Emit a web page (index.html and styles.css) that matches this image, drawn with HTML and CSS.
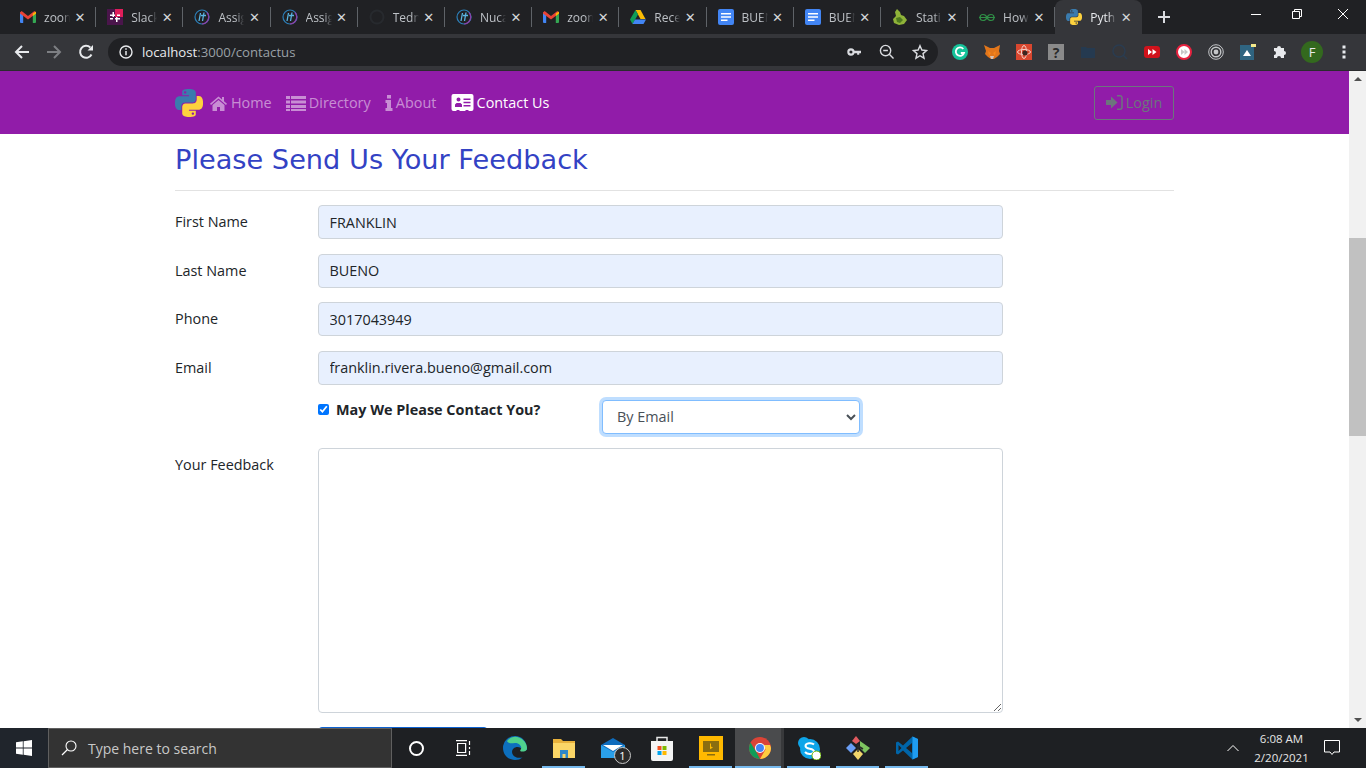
FILE: index.html
```html
<!DOCTYPE html>
<html lang="en">
<head>
    <meta charset="utf-8">
    <title>Contact Us</title>
    <link rel="stylesheet" href="styles.css">
</head>
<body>
    <svg class="defs" width="0" height="0">
        <symbol id="gmail" viewBox="0 0 16 16">
            <path fill="#4285f4" d="M0 3.5h3.2V14H1a1 1 0 0 1-1-1z"/>
            <path fill="#34a853" d="M12.8 3.5H16V13a1 1 0 0 1-1 1h-2.2z"/>
            <path fill="#ea4335" d="M0 3.5 1.6 2 8 7l6.4-5L16 3.5v1L8 10.400 0 4.500z"/>
            <path fill="#fbbc04" d="M12.800 4.500 16 2.600v2l-3.200 2.400z"/>
        </symbol>
        <symbol id="ithub" viewBox="0 0 16 16">
            <circle cx="8" cy="8" r="7" fill="none" stroke="#2c7fb8" stroke-width="1.200"/>
            <path fill="none" stroke="#8e3fa8" stroke-width="1.200" d="M13 3.500A7 7 0 0 1 8 15"/>
            <path fill="none" stroke="#5ab4e0" stroke-width="1.300" d="M6.500 4 5 12M10 3.500 8.500 12M7 6.500h5"/>
        </symbol>
        <symbol id="docs" viewBox="0 0 16 16">
            <rect width="16" height="16" rx="2" fill="#4285f4"/>
            <path fill="#fff" d="M3 4h10v1.500H3zM3 7.200h10v1.500H3zM3 10.400h6.500v1.500H3z"/>
        </symbol>
        <symbol id="python" viewBox="0 0 24 24">
            <path fill="#3a7bad" fill-rule="evenodd" d="M14.250.18l.9.2.73.26.59.3.45.32.34.34.25.34.16.33.1.3.04.26.02.2-.01.13V8.500l-.05.63-.13.55-.21.46-.26.38-.3.31-.33.25-.35.19-.35.14-.33.1-.3.07-.26.04-.21.02H8.770l-.69.05-.59.14-.5.22-.41.27-.33.32-.27.35-.2.36-.15.37-.1.35-.07.32-.04.27-.02.21v3.060H3.170l-.21-.03-.28-.07-.32-.12-.35-.18-.36-.26-.36-.36-.35-.46-.32-.59-.28-.73-.21-.88-.14-1.050-.05-1.230.06-1.220.16-1.040.24-.87.32-.71.36-.57.4-.44.42-.33.42-.24.4-.16.36-.1.32-.05.24-.01h.16l.06.01h8.160v-.83H6.180l-.01-2.750-.02-.37.05-.34.11-.31.17-.28.25-.26.31-.23.38-.2.44-.18.51-.15.58-.12.64-.1.71-.06.77-.04.84-.02 1.270.05zm-6.300 1.980l-.23.33-.08.41.08.41.23.34.33.22.41.09.41-.09.33-.22.23-.34.08-.41-.08-.41-.23-.33-.33-.22-.41-.09-.41.09z"/>
            <path fill="#fdd23e" fill-rule="evenodd" d="M21.040 6.110l.28.06.32.12.35.18.36.27.36.35.35.47.32.59.28.73.21.88.14 1.040.05 1.230-.06 1.230-.16 1.040-.24.86-.32.71-.36.57-.4.45-.42.33-.42.24-.4.16-.36.09-.32.05-.24.02-.16-.01h-8.220v.82h5.840l.01 2.760.02.36-.05.34-.11.31-.17.29-.25.25-.31.24-.38.2-.44.17-.51.15-.58.13-.64.09-.71.07-.77.04-.84.01-1.270-.04-1.070-.14-.9-.2-.73-.25-.59-.3-.45-.33-.34-.34-.25-.34-.16-.33-.1-.3-.04-.25-.02-.2.01-.13v-5.340l.05-.64.13-.54.21-.46.26-.38.3-.32.33-.24.35-.2.35-.14.33-.1.3-.06.26-.04.21-.02.13-.01h5.840l.69-.05.59-.14.5-.21.41-.28.33-.32.27-.35.2-.36.15-.36.1-.35.07-.32.04-.28.02-.21V6.070h2.090l.14.01zm-6.470 14.250l-.23.33-.08.41.08.41.23.33.33.23.41.08.41-.08.33-.23.23-.33.08-.41-.08-.41-.23-.33-.33-.23-.41-.08-.41.08z"/>
        </symbol>
    </svg>

    <!-- browser tabs -->
    <div class="tabstrip">
        <div class="tab">
            <svg class="favicon"><use href="#gmail"/></svg><span class="tab-title">zoom</span><span class="tab-close">&#10005;</span>
        </div>
        <div class="tab">
            <svg class="favicon" viewBox="0 0 16 16"><rect width="16" height="16" fill="#4a154b"/><path fill="#e01e5a" d="M8 0h8v8H8z"/><path fill="#fff" d="M3 5.500h5V7H3zM8 9h5v1.500H8zM5.500 3H7v5H5.500zM9 8h1.500v5H9zM3 9h3v1.500H3zM10 5.500h3V7h-3z"/></svg><span class="tab-title">Slack</span><span class="tab-close">&#10005;</span>
        </div>
        <div class="tab">
            <svg class="favicon"><use href="#ithub"/></svg><span class="tab-title">Assig</span><span class="tab-close">&#10005;</span>
        </div>
        <div class="tab">
            <svg class="favicon"><use href="#ithub"/></svg><span class="tab-title">Assig</span><span class="tab-close">&#10005;</span>
        </div>
        <div class="tab">
            <svg class="favicon" viewBox="0 0 16 16"><circle cx="8" cy="8" r="7.500" fill="#272a2e"/><circle cx="8" cy="8" r="5.500" fill="#202124"/></svg><span class="tab-title">Tedn</span><span class="tab-close">&#10005;</span>
        </div>
        <div class="tab">
            <svg class="favicon"><use href="#ithub"/></svg><span class="tab-title">Nuca</span><span class="tab-close">&#10005;</span>
        </div>
        <div class="tab">
            <svg class="favicon"><use href="#gmail"/></svg><span class="tab-title">zoom</span><span class="tab-close">&#10005;</span>
        </div>
        <div class="tab">
            <svg class="favicon" viewBox="0 0 16 16"><path fill="#fbbc04" d="M5.500 1h5l5 9h-5z"/><path fill="#0f9d58" d="M5.500 1 0 10.500 2.500 15l5.500-9.500z"/><path fill="#4285f4" d="M5 10.500h11L13.500 15h-11z"/></svg><span class="tab-title">Rece</span><span class="tab-close">&#10005;</span>
        </div>
        <div class="tab">
            <svg class="favicon"><use href="#docs"/></svg><span class="tab-title">BUEN</span><span class="tab-close">&#10005;</span>
        </div>
        <div class="tab">
            <svg class="favicon"><use href="#docs"/></svg><span class="tab-title">BUEN</span><span class="tab-close">&#10005;</span>
        </div>
        <div class="tab">
            <svg class="favicon" viewBox="0 0 16 16"><path fill="#8fb339" d="M5 0l3 3 1 3 3 1 3 4-3 4-5 1-5-2-1-4 3-3-1-4z"/><path fill="#4e7a1e" d="M4 9l4-1 3 3-3 3-3-1z"/></svg><span class="tab-title">Stati</span><span class="tab-close">&#10005;</span>
        </div>
        <div class="tab">
            <svg class="favicon" viewBox="0 0 16 16"><path fill="none" stroke="#2f8d46" stroke-width="1.200" d="M0 8.500h16M8 8.500C7 6 5.500 5.500 4 5.500A3 3 0 0 0 4 11.500C5.500 11.500 7 11 8 8.500C9 6 10.500 5.500 12 5.500A3 3 0 0 1 12 11.500C10.500 11.500 9 11 8 8.500"/></svg><span class="tab-title">How</span><span class="tab-close">&#10005;</span>
        </div>
        <div class="tab tab-active">
            <svg class="favicon"><use href="#python"/></svg><span class="tab-title">Pyth</span><span class="tab-close">&#10005;</span>
        </div>
        <svg class="new-tab" width="14" height="14" viewBox="0 0 14 14"><path stroke="#dadce0" stroke-width="2" d="M7 1v12M1 7h12"/></svg>
        <div class="window-controls">
            <svg width="12" height="12" viewBox="0 0 12 12"><path stroke="#fff" d="M1 6.500h10"/></svg>
            <svg width="12" height="12" viewBox="0 0 12 12"><path fill="none" stroke="#fff" d="M1.500 3.500h7v7h-7zM3.500 3.500v-2h7v7h-2"/></svg>
            <svg width="12" height="12" viewBox="0 0 12 12"><path stroke="#fff" d="M1 1l10 10M11 1 1 11"/></svg>
        </div>
    </div>

    <!-- address bar -->
    <div class="toolbar">
        <svg class="tool" width="16" height="16" viewBox="0 0 16 16"><path fill="none" stroke="#e8eaed" stroke-width="2" d="M15 8H2M8 2 2 8l6 6"/></svg>
        <svg class="tool" width="16" height="16" viewBox="0 0 16 16"><path fill="none" stroke="#7d7f83" stroke-width="2" d="M1 8h13M8 2l6 6-6 6"/></svg>
        <svg class="tool" width="16" height="16" viewBox="0 0 16 16"><path fill="none" stroke="#e8eaed" stroke-width="2" d="M13.500 10.500A6 6 0 1 1 12.300 3.500"/><path fill="#e8eaed" d="M9.500 6.500H15V1z"/></svg>
        <div class="omnibox">
            <svg width="14" height="14" viewBox="0 0 14 14"><circle cx="7" cy="7" r="6" fill="none" stroke="#e8eaed" stroke-width="1.400"/><path stroke="#e8eaed" stroke-width="1.500" d="M7 6v4.200M7 3.300v1.500"/></svg>
            <span class="url"><span class="url-host">localhost</span>:3000/contactus</span>
            <div class="omnibox-actions">
                <svg width="14" height="14" viewBox="0 0 16 16"><circle cx="4.500" cy="8" r="3" fill="none" stroke="#dadce0" stroke-width="2.400"/><path fill="#dadce0" d="M7 6.600h9v2.800h-2v1.800h-2.400V9.400H7z"/></svg>
                <svg width="15" height="15" viewBox="0 0 16 16"><circle cx="7" cy="7" r="5.500" fill="none" stroke="#dadce0" stroke-width="1.500"/><path stroke="#dadce0" stroke-width="1.500" d="M11 11l4.500 4.500M4.500 7h5"/></svg>
                <svg width="16" height="16" viewBox="0 0 17 17"><path fill="none" stroke="#dadce0" stroke-width="1.500" d="M8.500 1.800 10.500 6.400l5 .5-3.800 3.300 1.100 4.900-4.300-2.600-4.300 2.600 1.100-4.900L1.500 6.900l5-.5z"/></svg>
            </div>
        </div>
        <div class="extensions">
            <svg class="ext" viewBox="0 0 16 16"><circle cx="8" cy="8" r="8" fill="#15c39a"/><path fill="none" stroke="#fff" stroke-width="1.800" d="M11.300 5A4.200 4.200 0 1 0 12 9H8.800"/></svg>
            <svg class="ext" viewBox="0 0 16 16"><path fill="#e2761b" d="M0 1l6 3h4l6-3-1 6 1 3-3 3-3 2H7l-3-2-3-3 1-3z"/><path fill="#f6851b" d="M4 7l3 2-2 3zM12 7l-3 2 2 3z"/><path fill="#d7c1b3" d="M6 12h4l-1 3H7z"/></svg>
            <svg class="ext" viewBox="0 0 16 16"><rect width="16" height="16" fill="#d9472f"/><ellipse cx="8" cy="8" rx="6.500" ry="2.500" fill="none" stroke="#f6d0c8"/><ellipse cx="8" cy="8" rx="2.500" ry="6.500" fill="none" stroke="#f6d0c8"/><circle cx="9" cy="9" r="2.500" fill="#3b2520"/></svg>
            <svg class="ext" viewBox="0 0 16 16"><rect width="16" height="16" fill="#8a8a8a"/><text x="8" y="13.500" class="ext-mark">?</text></svg>
            <svg class="ext" viewBox="0 0 16 16"><path fill="#253a50" d="M1 3h5l1 1h8v10H1z"/></svg>
            <svg class="ext" viewBox="0 0 16 16"><circle cx="7" cy="7" r="6" fill="none" stroke="#2a3c50" stroke-width="1.500"/><path stroke="#2a3c50" stroke-width="1.500" d="M11 11l4 4"/></svg>
            <svg class="ext" viewBox="0 0 16 16"><rect y="2" width="16" height="12" rx="3" fill="#d0121b"/><path fill="#fff" d="M4 5l4 3-4 3zM8.500 5l4 3-4 3z"/></svg>
            <svg class="ext" viewBox="0 0 16 16"><circle cx="8" cy="8" r="7" fill="#fff" stroke="#e8223f" stroke-width="2"/><path fill="#c8c8c8" d="M5 5l3.500 3L5 11zM8.500 5l3.500 3-3.500 3z"/></svg>
            <svg class="ext" viewBox="0 0 16 16"><g fill="none" stroke="#c4c6c9"><circle cx="8" cy="8" r="7.300"/><circle cx="8" cy="8" r="4.800" stroke-width="1.400"/></g><circle cx="8" cy="8" r="2.400" fill="#c4c6c9"/></svg>
            <svg class="ext" viewBox="0 0 16 16"><rect y="1" width="14" height="15" fill="#2f6480"/><path fill="#fff" d="M7 6l4 6H3z"/><rect x="11" width="5" height="3" fill="#f4e98a"/></svg>
            <svg class="ext" viewBox="0 0 16 16"><path fill="#e8eaed" d="M2 4h3a2 2 0 0 1 4 0h3v3a2 2 0 0 1 0 4v3H9a2 2 0 0 0-4 0H2v-3a2 2 0 0 0 0-4z"/></svg>
            <span class="avatar">F</span>
            <svg class="ext" viewBox="0 0 16 16"><path fill="#e8eaed" d="M6.500 1.500h3v3h-3zM6.500 6.500h3v3h-3zM6.500 11.500h3v3h-3z"/></svg>
        </div>
    </div>

    <div class="viewport">
        <div class="page">
            <nav class="navbar">
                <div class="container navbar-inner">
                    <svg class="logo" viewBox="0 0 24 24"><use href="#python"/></svg>
                    <a class="nav-link" href="#">
                        <svg width="19" height="16" viewBox="0 0 19 16"><path d="M9.500 1.500 1 8.800l1 1.100L9.500 3.500l7.500 6.400 1-1.100-3-2.600V2h-2v2.500zM3.500 10v6h4.500v-4h3v4h4.500v-6L9.500 5z"/></svg>
                        Home
                    </a>
                    <a class="nav-link" href="#">
                        <svg width="20" height="16" viewBox="0 0 20 16"><path d="M0 1h4v3H0zM5 1h15v3H5zM0 5.500h4v3H0zM5 5.500h15v3H5zM0 10h4v3H0zM5 10h15v3H5zM0 14h4v2H0zM5 14h15v2H5z"/></svg>
                        Directory
                    </a>
                    <a class="nav-link" href="#">
                        <svg width="8" height="16" viewBox="0 0 7 16"><path d="M1.500 0h4v3.500h-4zM0 5h5.500v8H7v3H0v-3h1.500V8H0z"/></svg>
                        About
                    </a>
                    <a class="nav-link nav-link-active" href="#">
                        <svg width="23" height="17" viewBox="0 0 22 17"><path fill-rule="evenodd" d="M2 0h18a2 2 0 0 1 2 2v13a2 2 0 0 1-2 2h-3v-1h-3v1H8v-1H5v1H2a2 2 0 0 1-2-2V2a2 2 0 0 1 2-2zM7 3.500a2 2 0 1 0 0 4 2 2 0 0 0 0-4zM3.500 13V10.500L5 9h4l1.500 1.500V13zM12 4.500v1.500h7V4.500zM12 7.800v1.500h7V7.800zM12 11v1.500h7V11z" fill="#fff"/></svg>
                        Contact Us
                    </a>
                    <a class="login-btn" href="#">
                        <svg width="17" height="15" viewBox="0 0 17 15"><path d="M0 5h5V1.500L11.500 7.500 5 13.500V10H0z"/><path fill="none" stroke="currentColor" stroke-width="1.500" d="M11 .8h3a2 2 0 0 1 2 2v9.400a2 2 0 0 1-2 2h-3"/></svg>
                        Login
                    </a>
                </div>
            </nav>

            <main class="container">
                <h2 class="feedback-title">Please Send Us Your Feedback</h2>
                <hr class="divider">
                <form class="feedback-form">
                    <label class="field-label">First Name</label>
                    <input class="field" type="text" value="FRANKLIN">
                    <label class="field-label">Last Name</label>
                    <input class="field" type="text" value="BUENO">
                    <label class="field-label">Phone</label>
                    <input class="field" type="text" value="3017043949">
                    <label class="field-label">Email</label>
                    <input class="field" type="text" value="franklin.rivera.bueno@gmail.com">
                    <div class="contact-row">
                        <label class="contact-check"><input type="checkbox" checked> May We Please Contact You?</label>
                        <select class="contact-type">
                            <option>By Email</option>
                            <option>By Phone</option>
                        </select>
                    </div>
                    <label class="field-label feedback-label">Your Feedback</label>
                    <textarea class="feedback-text"></textarea>
                    <button class="submit-btn" type="button">Send Feedback</button>
                </form>
            </main>
        </div>
        <div class="scrollbar">
            <span class="arrow-up"></span>
            <div class="scroll-track"><div class="scroll-thumb"></div></div>
            <span class="arrow-down"></span>
        </div>
    </div>

    <!-- windows taskbar -->
    <footer class="taskbar">
        <div class="start">
            <svg width="16" height="16" viewBox="0 0 16 16"><path fill="#fff" d="M0 2.300 6.800 1.300v6.300H0zM7.600 1.200 16 0v7.600H7.600zM0 8.400h6.800v6.300L0 13.700zM7.600 8.400H16V16l-8.400-1.200z"/></svg>
        </div>
        <div class="search-box">
            <svg width="16" height="16" viewBox="0 0 16 16"><circle cx="10" cy="6" r="5" fill="none" stroke="#fff" stroke-width="1.100"/><path stroke="#fff" stroke-width="1.200" d="M6.500 9.500 1 15"/></svg>
            <span class="search-text">Type here to search</span>
        </div>
        <div class="task-cell cortana"><span class="cortana-ring"></span></div>
        <div class="task-cell">
            <svg class="taskview-icon" width="18" height="16" viewBox="0 0 18 16"><path fill="none" stroke="#fff" stroke-width="1.200" d="M1 .6h11M1 15.400h11M2.600 3.500h8v9h-8zM14.500 1v4M14.500 7v2M14.500 11v4"/></svg>
        </div>
        <div class="task-cell">
            <svg width="24" height="24" viewBox="0 0 24 24"><path fill="#0d6fbd" d="M12 0a12 12 0 0 0-12 12c0 7 5.500 12 12 12 3 0 5.500-.8 7.500-2.500-2 .5-8 1-10-3.500-1.500-3.500 1-7 5-7 2.500 0 4 1.200 4.300 3H24C24 5 19 0 12 0z"/><path fill="#4fd18d" d="M4 5C7 1 12 0 16 1.500c4 1.500 8 5.500 8 10.500 0 3-2.500 3.500-5 3.500-2.500 0-2-1-1-2.500 1-2-1-6-6-6C9 7 6 8.500 4 5z"/></svg>
        </div>
        <div class="task-cell running">
            <svg width="22" height="20" viewBox="0 0 22 20"><path fill="#e8b13b" d="M0 1h8l2 2h12v4H0z"/><path fill="#fbd667" d="M0 5h22v15H0z"/><path fill="#2f88c9" d="M7 12h8v8h-2.500v-4h-3v4H7z"/></svg>
        </div>
        <div class="task-cell">
            <svg class="mail-icon" width="24" height="20" viewBox="0 0 24 20"><path fill="#0f6cbd" d="M12 0 0 7v13h24V7z"/><path fill="#fff" d="M2 7h20l-10 6z"/><path fill="#2aa0ea" d="M0 7l12 7 12-7v13H0z"/></svg>
            <span class="mail-badge">1</span>
        </div>
        <div class="task-cell">
            <svg width="24" height="26" viewBox="0 0 24 26"><path fill="none" stroke="#e8e8e8" stroke-width="1.500" d="M7 7V2.500h10V7"/><path fill="#f4f4f4" d="M1 6h22v18a2 2 0 0 1-2 2H3a2 2 0 0 1-2-2z"/><path fill="#f25022" d="M7.500 11h4v4h-4z"/><path fill="#7fba00" d="M12.500 11h4v4h-4z"/><path fill="#00a4ef" d="M7.500 16h4v4h-4z"/><path fill="#ffb900" d="M12.500 16h4v4h-4z"/></svg>
        </div>
        <div class="task-cell running">
            <svg width="24" height="24" viewBox="0 0 24 24"><rect width="24" height="24" fill="#ffb900"/><path fill="#8a6d10" d="M4 5h16v11H4zM8 18h8v1.500H8z"/><path fill="#ffb900" d="M11 7.500h1v3l2 1-3 1.700z"/></svg>
        </div>
        <div class="task-cell running task-active">
            <svg width="24" height="24" viewBox="0 0 24 24"><circle cx="12" cy="12" r="11" fill="#db4437"/><path fill="#0f9d58" d="M12 23A11 11 0 0 1 2.500 6.500L8 15.500z"/><path fill="#ffcd40" d="M23 12a11 11 0 0 1-11 11l5.500-9.500-2-4.500H22a11 11 0 0 1 1 3z"/><circle cx="12" cy="12" r="5" fill="#fff"/><circle cx="12" cy="12" r="4" fill="#4285f4"/></svg>
        </div>
        <div class="task-cell running">
            <svg class="skype-icon" width="24" height="24" viewBox="0 0 24 24"><circle cx="7" cy="7" r="6" fill="#0ea5e9"/><circle cx="13" cy="13" r="10" fill="#0ea5e9"/><path fill="none" stroke="#fff" stroke-width="2" d="M17 8.500C15 6.500 8.500 6.500 8.500 10c0 4 8.500 1.500 8.500 5.500 0 3-6.500 3.500-9 .5"/><circle cx="19.500" cy="19.500" r="4.500" fill="#fff" stroke="#6bb700"/></svg>
        </div>
        <div class="task-cell running">
            <svg width="24" height="24" viewBox="0 0 24 24"><path fill="#e05a5f" d="M6 5l4-5 4 5-4 3z"/><path fill="#7ec460" d="M14 5l10 7-5 5-5-5z"/><path fill="#6a9ef5" d="M0 12l5-5 5 5-5 5z"/><path fill="#f1d66c" d="M7 18l5-5 5 5-5 6z"/><path stroke="#2a2a2a" stroke-width="1.500" d="M12 8v8M12 10l5 3"/></svg>
        </div>
        <div class="task-cell running">
            <svg width="24" height="24" viewBox="0 0 24 24"><path fill="#0065a9" d="M17.500.5 8 9.500 3 5.500 1 6.500v11l2 1 5-4 9.500 9L23 21V3zM3.500 15V9l3 3zM17 17l-6-5 6-5z"/><path fill="#1f9cf0" d="M17.500.5 23 3v18l-5.500 2.500z"/></svg>
        </div>
        <div class="tray">
            <svg width="12" height="8" viewBox="0 0 12 8"><path fill="none" stroke="#fff" d="M.5 7 6 1.500 11.500 7"/></svg>
            <div class="clock"><span>6:08 AM</span><span>2/20/2021</span></div>
            <svg width="16" height="16" viewBox="0 0 16 16"><path fill="none" stroke="#fff" d="M.5 .5h15v11.500H10l-2 2.500-2-2.500H.5z"/></svg>
        </div>
    </footer>
</body>
</html>
```

FILE: styles.css
```css
/* General Styles */
* {
    margin: 0;
    padding: 0;
    box-sizing: border-box;
}

html, body {
    height: 100%;
    overflow: hidden;
}

body {
    display: flex;
    flex-direction: column;
    font-family: "Open Sans", sans-serif;
    background: #fff;
}

.defs {
    position: absolute;
}

/* Tab Strip */
.tabstrip {
    flex: 0 0 34px;
    display: flex;
    align-items: stretch;
    padding-left: 9px;
    background: #202124;
}

.tab {
    flex: 0 0 87.2px;
    display: flex;
    align-items: center;
    padding-left: 11px;
    position: relative;
}

.tab::after {
    content: "";
    position: absolute;
    right: 0;
    top: 7px;
    height: 20px;
    width: 1px;
    background: #5f6368;
}

.tab-active::after {
    display: none;
}

.tab-active {
    background: #35363a;
    border-radius: 8px 8px 0 0;
}

.favicon {
    width: 16px;
    height: 16px;
    flex: none;
}

.tab-title {
    width: 26px;
    margin-left: 8px;
    overflow: hidden;
    white-space: nowrap;
    font-size: 12px;
    color: #bdc1c6;
    -webkit-mask-image: linear-gradient(to right, #000 70%, transparent);
    mask-image: linear-gradient(to right, #000 70%, transparent);
}

.tab-active .tab-title {
    color: #e8eaed;
}

.tab-close {
    width: 14px;
    margin-left: 3px;
    font-family: "DejaVu Sans", sans-serif;
    font-size: 13px;
    font-weight: 700;
    text-align: center;
    color: #d4d6d9;
}

.new-tab {
    align-self: center;
    margin-left: 15px;
}

.window-controls {
    margin-left: auto;
    width: 137px;
    padding: 0 17px 7px 21px;
    display: flex;
    justify-content: space-between;
    align-items: center;
}

.window-controls svg:nth-child(2) {
    margin-right: 5px;
}

/* Address Bar */
.toolbar {
    flex: 0 0 37px;
    display: flex;
    align-items: center;
    padding: 0 0 1px 14px;
    background: #35363a;
    border-bottom: 1px solid #2a2b2e;
}

.tool {
    flex: none;
    margin-right: 16px;
}

.omnibox {
    width: 830px;
    height: 28px;
    margin-left: -2px;
    display: flex;
    align-items: center;
    padding-left: 11px;
    border-radius: 14px;
    background: #202124;
}

.url {
    margin-left: 9px;
    font-size: 13.2px;
    color: #9aa0a6;
}

.url-host {
    color: #e8eaed;
}

.omnibox-actions {
    margin-left: auto;
    width: 91px;
    padding-right: 10px;
    display: flex;
    justify-content: space-between;
    align-items: center;
}

.extensions {
    display: flex;
    align-items: center;
    margin-left: 14px;
    gap: 16px;
}

.ext {
    width: 16px;
    height: 16px;
    flex: none;
}

.ext-mark {
    font: bold 14px "Open Sans", sans-serif;
    fill: #2a2a2a;
    text-anchor: middle;
}

.avatar {
    width: 22px;
    height: 22px;
    margin: 0 -3px;
    border-radius: 50%;
    background: #33691e;
    color: #e8eaed;
    font-size: 13px;
    line-height: 22px;
    text-align: center;
}

/* Page */
.viewport {
    flex: 1;
    min-height: 0;
    display: flex;
}

.page {
    flex: 1;
    min-width: 0;
    overflow: hidden;
}

.container {
    width: 999px;
    margin-left: 175px;
}

/* Navbar */
.navbar {
    height: 63px;
    background: #911ca9;
}

.navbar-inner {
    height: 100%;
    display: flex;
    align-items: center;
}

.logo {
    width: 28px;
    height: 28px;
    margin-right: 6px;
}

.nav-link {
    display: flex;
    align-items: center;
    gap: 3px;
    margin-right: 14.2px;
    color: rgba(255, 255, 255, 0.5);
    font-size: 14.4px;
    text-decoration: none;
}

.nav-link svg {
    fill: currentColor;
}

.nav-link-active {
    color: #fff;
}

.login-btn {
    margin-left: auto;
    width: 80px;
    height: 34px;
    display: flex;
    align-items: center;
    justify-content: center;
    gap: 3px;
    border: 1px solid #6c757d;
    border-radius: 3px;
    color: #6c757d;
    font-size: 14.4px;
    text-decoration: none;
}

.login-btn svg {
    fill: currentColor;
}

/* Heading */
.feedback-title {
    margin-top: 6px;
    height: 40px;
    font-family: "Comic Sans MS", "DejaVu Sans", sans-serif;
    font-size: 27.2px;
    font-weight: 400;
    line-height: 39px;
    color: #3342c4;
}

.divider {
    margin-top: 10px;
    border: none;
    border-top: 1px solid #e2e2e2;
}

/* Form */
.feedback-form {
    margin-top: 14px;
    display: grid;
    grid-template-columns: 143px 685px;
    row-gap: 14.5px;
    align-items: start;
}

.field-label {
    font-size: 14.4px;
    line-height: 34px;
    color: #212529;
}

.field {
    height: 34px;
    padding: 0 10.5px;
    border: 1px solid #ced4da;
    border-radius: 4px;
    background: #e8f0fe;
    color: #212529;
    font-family: inherit;
    font-size: 14.4px;
}

.contact-row {
    grid-column: 2;
    display: grid;
    grid-template-columns: 284px 258px;
}

.contact-check {
    display: flex;
    align-items: center;
    height: 21px;
    gap: 7px;
    font-size: 14.4px;
    font-weight: 700;
    color: #212529;
}

.contact-check input {
    width: 11px;
    height: 11px;
    accent-color: #0075ff;
}

.contact-type {
    height: 34px;
    margin: 0.5px 0 -0.5px;
    padding-left: 10px;
    border: 1px solid #80bdff;
    border-radius: 4px;
    box-shadow: 0 0 0 3px rgba(0, 123, 255, 0.25);
    background: #fff;
    color: #495057;
    font-family: inherit;
    font-size: 14.4px;
}

.feedback-label {
    line-height: 33px;
}

.feedback-text {
    height: 265px;
    border: 1px solid #ced4da;
    border-radius: 4px;
}

.submit-btn {
    grid-column: 2;
    width: 170px;
    height: 38px;
    border: 1px solid #0d62d1;
    border-radius: 4px;
    background: #007bff;
    color: #fff;
    font-family: inherit;
    font-size: 14.4px;
}

/* Scrollbar */
.scrollbar {
    flex: 0 0 17px;
    display: flex;
    flex-direction: column;
    align-items: center;
    background: #f1f1f1;
}

.scroll-track {
    flex: 1;
    width: 100%;
    padding-top: 151px;
}

.scroll-thumb {
    height: 198px;
    background: #c1c1c1;
}

.arrow-up,
.arrow-down {
    flex: none;
    width: 0;
    height: 0;
    margin: 6px 0;
    border-left: 4px solid transparent;
    border-right: 4px solid transparent;
}

.arrow-up {
    border-bottom: 4px solid #505050;
}

.arrow-down {
    border-top: 4px solid #505050;
}

/* Taskbar */
.taskbar {
    flex: 0 0 40px;
    display: flex;
    background: #1e2023;
}

.start {
    flex: 0 0 48px;
    display: flex;
    align-items: center;
    justify-content: center;
    background: #20252c;
}

.search-box {
    flex: 0 0 344px;
    display: flex;
    align-items: center;
    gap: 11px;
    padding-left: 12px;
    border: 1px solid #5f5f5f;
    background: #333;
}

.search-text {
    font-size: 14px;
    color: #c8c8c8;
}

.task-cell {
    flex: 0 0 49px;
    position: relative;
    display: flex;
    align-items: center;
    justify-content: center;
}

.taskview-icon {
    margin-right: 3px;
}

.cortana-ring {
    width: 15px;
    height: 15px;
    border: 2px solid #fff;
    border-radius: 50%;
}

.running::after {
    content: "";
    position: absolute;
    left: 3px;
    right: 3px;
    bottom: 0;
    height: 2px;
    background: #76b9ed;
}

.task-active {
    background: linear-gradient(to right, #4a4b4d 46px, #38393b 46px);
}

.task-active::after {
    left: 0;
}

.mail-badge {
    position: absolute;
    left: 26px;
    top: 19px;
    width: 17px;
    height: 17px;
    border: 1px solid #c8c8c8;
    border-radius: 50%;
    background: #2b2b2b;
    color: #fff;
    font-size: 11px;
    line-height: 15px;
    text-align: center;
}

.tray {
    margin-left: auto;
    width: 139px;
    padding-right: 26px;
    display: flex;
    align-items: center;
    justify-content: space-between;
}

.clock {
    display: flex;
    flex-direction: column;
    align-items: center;
    color: #e6e6e6;
    font-size: 11.5px;
    line-height: 19px;
}
```
